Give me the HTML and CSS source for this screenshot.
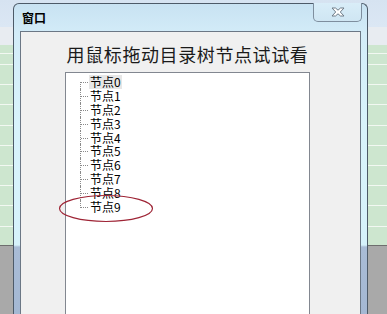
FILE: index.html
```html
<!DOCTYPE html>
<html lang="zh-CN">
<head>
  <meta charset="UTF-8">
  <title>窗口</title>
  <link rel="stylesheet" href="styles.css">
</head>
<body>
  <div class="window">
    <div class="titlebar">
      <span class="title">窗口</span>
      <button class="close-btn" title="关闭">
        <svg width="16" height="10" viewBox="0 0 16 10">
          <path d="M2 1 L5.5 1 L8 3.2 L10.5 1 L14 1 L10.3 5 L14 9 L10.5 9 L8 6.8 L5.5 9 L2 9 L5.7 5 Z"
                fill="#ffffff" stroke="#6f7c88" stroke-width="1" stroke-linejoin="round"/>
        </svg>
      </button>
    </div>

    <div class="client">
      <h1 class="heading">用鼠标拖动目录树节点试试看</h1>

      <div class="tree">
        <ul class="tree-list">
          <li class="node selected"><span class="label">节点0</span></li>
          <li class="node"><span class="label">节点1</span></li>
          <li class="node"><span class="label">节点2</span></li>
          <li class="node"><span class="label">节点3</span></li>
          <li class="node"><span class="label">节点4</span></li>
          <li class="node"><span class="label">节点5</span></li>
          <li class="node"><span class="label">节点6</span></li>
          <li class="node"><span class="label">节点7</span></li>
          <li class="node"><span class="label">节点8</span></li>
          <li class="node last"><span class="label">节点9</span></li>
        </ul>

        <!-- hand-drawn mark around the last node -->
        <svg class="circle-mark" width="100" height="32" viewBox="0 0 100 32">
          <ellipse cx="49" cy="15.5" rx="46.5" ry="13" fill="none" stroke="#9e2435" stroke-width="1.2"/>
        </svg>
      </div>
    </div>
  </div>
</body>
</html>
```

FILE: styles.css
```css
* { box-sizing: border-box; }

body {
  margin: 0;
  width: 387px;
  height: 314px;
  overflow: hidden;
  font-family: "Noto Sans CJK SC", "DejaVu Sans", sans-serif;
  padding: 3px 0 0 13px;
  background:
    linear-gradient(to bottom,
      #d6e3f1 0, #dbe7f4 27px,
      #e8ecf1 27px, #e8ecf1 45px,
      transparent 45px, transparent 245px,
      #6e6e6e 245px, #6e6e6e 246px,
      #a9a9a9 246px),
    repeating-linear-gradient(to bottom,
      #f2f8f2 0, #f2f8f2 1px,
      #cde6cf 1px, #cde6cf 20.2px);
  background-position: 0 0, 0 64px;
  background-repeat: no-repeat, repeat;
  background-color: #cde6cf;
}

.window {
  width: 355px;
  height: 311px;
  border: 1px solid #4d5a68;
  border-bottom: none;
  border-radius: 6px 6px 0 0;
  background: linear-gradient(to bottom,
    #c8e2f2 0, #d3ecf8 30px, #d8f3fb 120px, #d6f2fb 241px,
    #a9bcd6 243px, #a4b8d3 100%);
  padding: 0 6px;
  display: flex;
  flex-direction: column;
}

.titlebar {
  height: 27px;
  flex: none;
  display: flex;
  align-items: flex-start;
  justify-content: space-between;
}

.title {
  font-size: 12px;
  font-weight: bold;
  color: #000;
  margin-top: 7px;
  margin-left: 2px;
  line-height: 14px;
}

.close-btn {
  width: 49px;
  height: 19px;
  margin-top: -1px;
  margin-right: -1px;
  padding: 0;
  border: 1px solid #7e8e9e;
  border-top: none;
  border-radius: 0 0 5px 5px;
  background: linear-gradient(to bottom, #d9edf8, #cfe6f3);
  display: flex;
  align-items: center;
  justify-content: center;
}

.client {
  flex: 1;
  min-height: 0;
  overflow: hidden;
  background: #f0f0f0;
  border: 1px solid #6b7785;
  border-bottom: none;
  display: flex;
  flex-direction: column;
  align-items: center;
}

.heading {
  margin: 7px 0 3px -6px;
  font-size: 18px;
  font-weight: normal;
  letter-spacing: 0.6px;
  line-height: 30px;
  color: #1a1a1a;
}

.tree {
  position: relative;
  width: 245px;
  flex: 1;
  margin: 0 0 0 -6px;
  background: #fff;
  border: 1px solid #828790;
  border-bottom: none;
  padding: 2px 0 0 14px;
}

.tree-list {
  list-style: none;
  margin: 0;
  padding: 0;
}

.node {
  position: relative;
  height: 13.9px;
  padding-left: 9px;
  font-size: 12px;
  line-height: 13.9px;
  color: #000;
}

/* dotted connectors */
.node::before {
  content: "";
  position: absolute;
  left: 0;
  top: 0;
  bottom: 0;
  border-left: 1px dotted #8a8a8a;
}
.node:first-child::before { top: 7px; }
.node.last::before { bottom: 6px; }

.node::after {
  content: "";
  position: absolute;
  left: 1px;
  top: 7px;
  width: 7px;
  border-top: 1px dotted #8a8a8a;
}

.label {
  display: inline-block;
  vertical-align: top;
  padding: 0 1px;
  line-height: 13.9px;
}

.node.selected .label {
  background: #e6e6e6;
}

.circle-mark {
  position: absolute;
  left: -9px;
  top: 120px;
}
```
